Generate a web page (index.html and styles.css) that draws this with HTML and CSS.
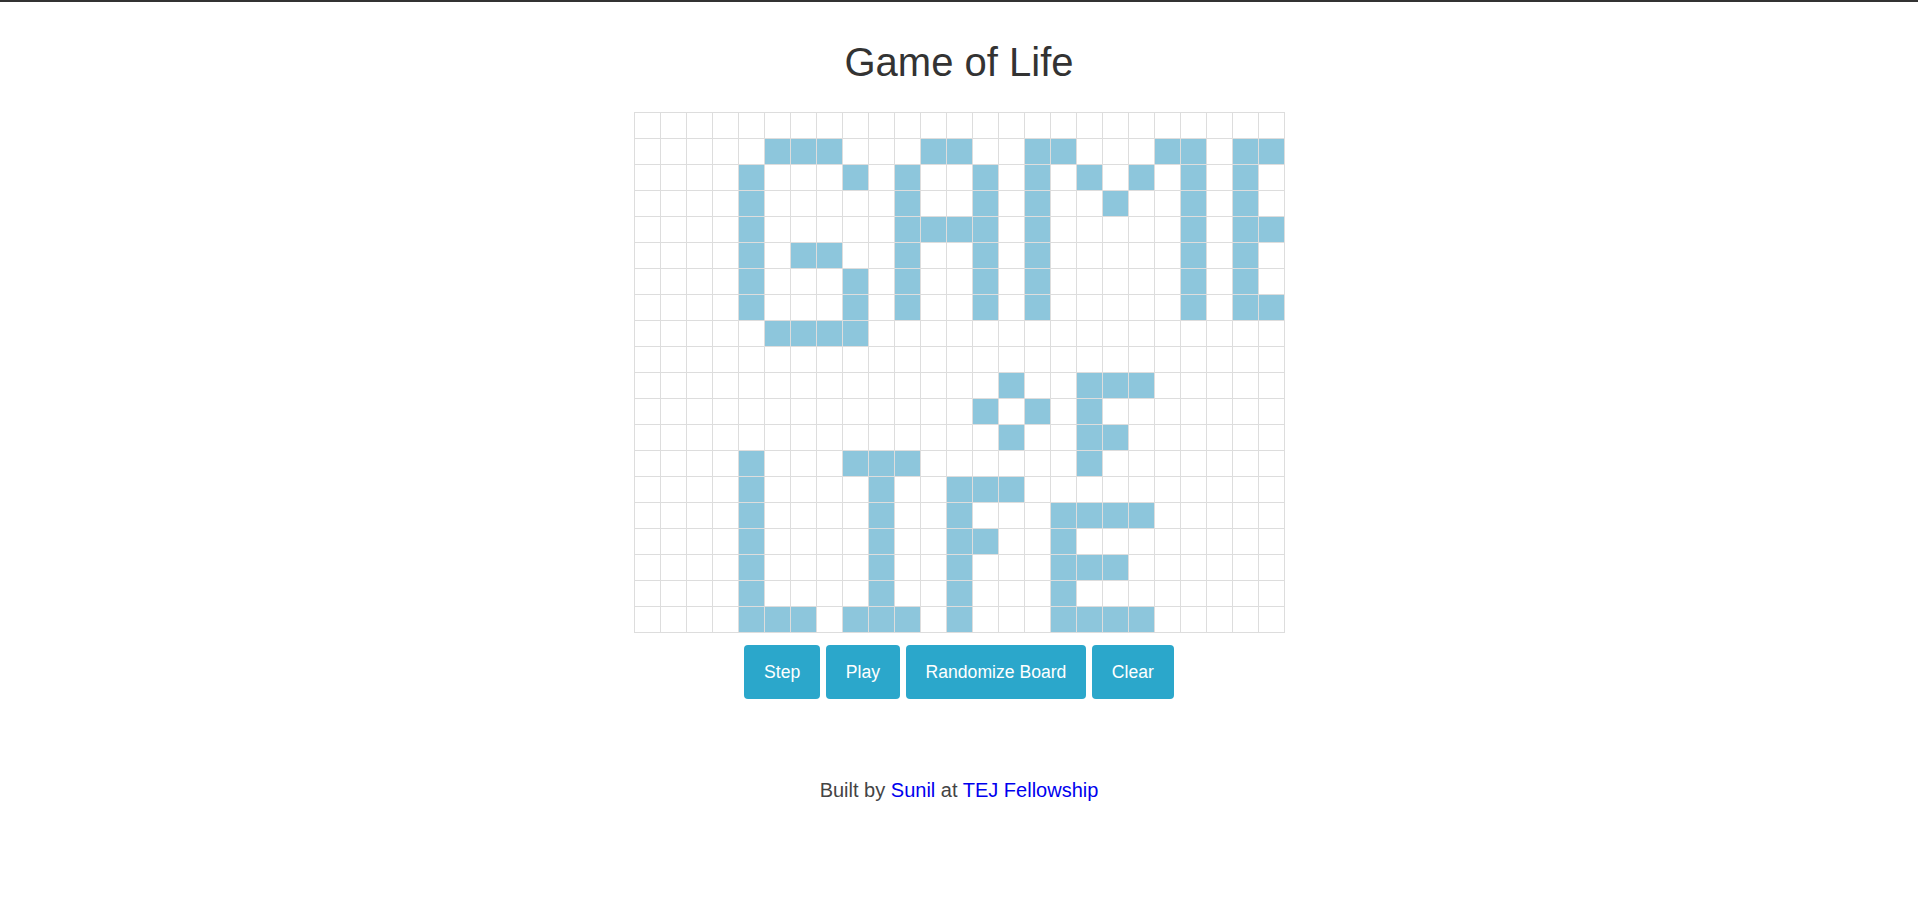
FILE: index.html
```html
<!DOCTYPE html>
<html lang="en">
<head>
<meta charset="utf-8">
<title>Game of Life</title>
<link rel="stylesheet" href="styles.css">
</head>
<body>
<main class="page">
  <h1 class="title">Game of Life</h1>
  <div class="board">
    <div class="row"><i></i><i></i><i></i><i></i><i></i><i></i><i></i><i></i><i></i><i></i><i></i><i></i><i></i><i></i><i></i><i></i><i></i><i></i><i></i><i></i><i></i><i></i><i></i><i></i><i></i></div>
    <div class="row"><i></i><i></i><i></i><i></i><i></i><i class="on"></i><i class="on"></i><i class="on"></i><i></i><i></i><i></i><i class="on"></i><i class="on"></i><i></i><i></i><i class="on"></i><i class="on"></i><i></i><i></i><i></i><i class="on"></i><i class="on"></i><i></i><i class="on"></i><i class="on"></i></div>
    <div class="row"><i></i><i></i><i></i><i></i><i class="on"></i><i></i><i></i><i></i><i class="on"></i><i></i><i class="on"></i><i></i><i></i><i class="on"></i><i></i><i class="on"></i><i></i><i class="on"></i><i></i><i class="on"></i><i></i><i class="on"></i><i></i><i class="on"></i><i></i></div>
    <div class="row"><i></i><i></i><i></i><i></i><i class="on"></i><i></i><i></i><i></i><i></i><i></i><i class="on"></i><i></i><i></i><i class="on"></i><i></i><i class="on"></i><i></i><i></i><i class="on"></i><i></i><i></i><i class="on"></i><i></i><i class="on"></i><i></i></div>
    <div class="row"><i></i><i></i><i></i><i></i><i class="on"></i><i></i><i></i><i></i><i></i><i></i><i class="on"></i><i class="on"></i><i class="on"></i><i class="on"></i><i></i><i class="on"></i><i></i><i></i><i></i><i></i><i></i><i class="on"></i><i></i><i class="on"></i><i class="on"></i></div>
    <div class="row"><i></i><i></i><i></i><i></i><i class="on"></i><i></i><i class="on"></i><i class="on"></i><i></i><i></i><i class="on"></i><i></i><i></i><i class="on"></i><i></i><i class="on"></i><i></i><i></i><i></i><i></i><i></i><i class="on"></i><i></i><i class="on"></i><i></i></div>
    <div class="row"><i></i><i></i><i></i><i></i><i class="on"></i><i></i><i></i><i></i><i class="on"></i><i></i><i class="on"></i><i></i><i></i><i class="on"></i><i></i><i class="on"></i><i></i><i></i><i></i><i></i><i></i><i class="on"></i><i></i><i class="on"></i><i></i></div>
    <div class="row"><i></i><i></i><i></i><i></i><i class="on"></i><i></i><i></i><i></i><i class="on"></i><i></i><i class="on"></i><i></i><i></i><i class="on"></i><i></i><i class="on"></i><i></i><i></i><i></i><i></i><i></i><i class="on"></i><i></i><i class="on"></i><i class="on"></i></div>
    <div class="row"><i></i><i></i><i></i><i></i><i></i><i class="on"></i><i class="on"></i><i class="on"></i><i class="on"></i><i></i><i></i><i></i><i></i><i></i><i></i><i></i><i></i><i></i><i></i><i></i><i></i><i></i><i></i><i></i><i></i></div>
    <div class="row"><i></i><i></i><i></i><i></i><i></i><i></i><i></i><i></i><i></i><i></i><i></i><i></i><i></i><i></i><i></i><i></i><i></i><i></i><i></i><i></i><i></i><i></i><i></i><i></i><i></i></div>
    <div class="row"><i></i><i></i><i></i><i></i><i></i><i></i><i></i><i></i><i></i><i></i><i></i><i></i><i></i><i></i><i class="on"></i><i></i><i></i><i class="on"></i><i class="on"></i><i class="on"></i><i></i><i></i><i></i><i></i><i></i></div>
    <div class="row"><i></i><i></i><i></i><i></i><i></i><i></i><i></i><i></i><i></i><i></i><i></i><i></i><i></i><i class="on"></i><i></i><i class="on"></i><i></i><i class="on"></i><i></i><i></i><i></i><i></i><i></i><i></i><i></i></div>
    <div class="row"><i></i><i></i><i></i><i></i><i></i><i></i><i></i><i></i><i></i><i></i><i></i><i></i><i></i><i></i><i class="on"></i><i></i><i></i><i class="on"></i><i class="on"></i><i></i><i></i><i></i><i></i><i></i><i></i></div>
    <div class="row"><i></i><i></i><i></i><i></i><i class="on"></i><i></i><i></i><i></i><i class="on"></i><i class="on"></i><i class="on"></i><i></i><i></i><i></i><i></i><i></i><i></i><i class="on"></i><i></i><i></i><i></i><i></i><i></i><i></i><i></i></div>
    <div class="row"><i></i><i></i><i></i><i></i><i class="on"></i><i></i><i></i><i></i><i></i><i class="on"></i><i></i><i></i><i class="on"></i><i class="on"></i><i class="on"></i><i></i><i></i><i></i><i></i><i></i><i></i><i></i><i></i><i></i><i></i></div>
    <div class="row"><i></i><i></i><i></i><i></i><i class="on"></i><i></i><i></i><i></i><i></i><i class="on"></i><i></i><i></i><i class="on"></i><i></i><i></i><i></i><i class="on"></i><i class="on"></i><i class="on"></i><i class="on"></i><i></i><i></i><i></i><i></i><i></i></div>
    <div class="row"><i></i><i></i><i></i><i></i><i class="on"></i><i></i><i></i><i></i><i></i><i class="on"></i><i></i><i></i><i class="on"></i><i class="on"></i><i></i><i></i><i class="on"></i><i></i><i></i><i></i><i></i><i></i><i></i><i></i><i></i></div>
    <div class="row"><i></i><i></i><i></i><i></i><i class="on"></i><i></i><i></i><i></i><i></i><i class="on"></i><i></i><i></i><i class="on"></i><i></i><i></i><i></i><i class="on"></i><i class="on"></i><i class="on"></i><i></i><i></i><i></i><i></i><i></i><i></i></div>
    <div class="row"><i></i><i></i><i></i><i></i><i class="on"></i><i></i><i></i><i></i><i></i><i class="on"></i><i></i><i></i><i class="on"></i><i></i><i></i><i></i><i class="on"></i><i></i><i></i><i></i><i></i><i></i><i></i><i></i><i></i></div>
    <div class="row"><i></i><i></i><i></i><i></i><i class="on"></i><i class="on"></i><i class="on"></i><i></i><i class="on"></i><i class="on"></i><i class="on"></i><i></i><i class="on"></i><i></i><i></i><i></i><i class="on"></i><i class="on"></i><i class="on"></i><i class="on"></i><i></i><i></i><i></i><i></i><i></i></div>
  </div>
  <div class="controls">
    <button class="btn">Step</button>
    <button class="btn">Play</button>
    <button class="btn">Randomize Board</button>
    <button class="btn">Clear</button>
  </div>
  <p class="footer">Built by <a class="link" href="#">Sunil</a> at <a class="link" href="#">TEJ Fellowship</a></p>
</main>
</body>
</html>
```

FILE: styles.css
```css
html, body {
  margin: 0;
  padding: 0;
  background: #fff;
}

body {
  border-top: 2px solid #333;
  font-family: "Liberation Sans", Arial, sans-serif;
  color: #333;
}

.page {
  display: flex;
  flex-direction: column;
  align-items: center;
}

.title {
  margin: 38px 0 28px;
  font-size: 40px;
  line-height: 44px;
  font-weight: normal;
  color: #333;
}

.board {
  display: flex;
  flex-direction: column;
  gap: 1px;
  padding: 1px;
  background: #ddd;
}

.row {
  display: flex;
  gap: 1px;
}

.row i {
  display: block;
  width: 25px;
  height: 25px;
  background: #fff;
}

.row i.on {
  background: #8dc6dc;
}

.controls {
  display: flex;
  gap: 5.5px;
  margin-top: 12px;
}

.btn {
  border: none;
  border-radius: 4px;
  background: #2ba7cb;
  color: #fff;
  font-family: "Liberation Sans", Arial, sans-serif;
  font-size: 17.6px;
  line-height: 20px;
  padding: 17px 20px;
  cursor: pointer;
}

.footer {
  margin: 80px 0 0;
  font-size: 20px;
  line-height: 23px;
  color: #444;
}

.link {
  color: #0000ee;
  text-decoration: none;
}
```
